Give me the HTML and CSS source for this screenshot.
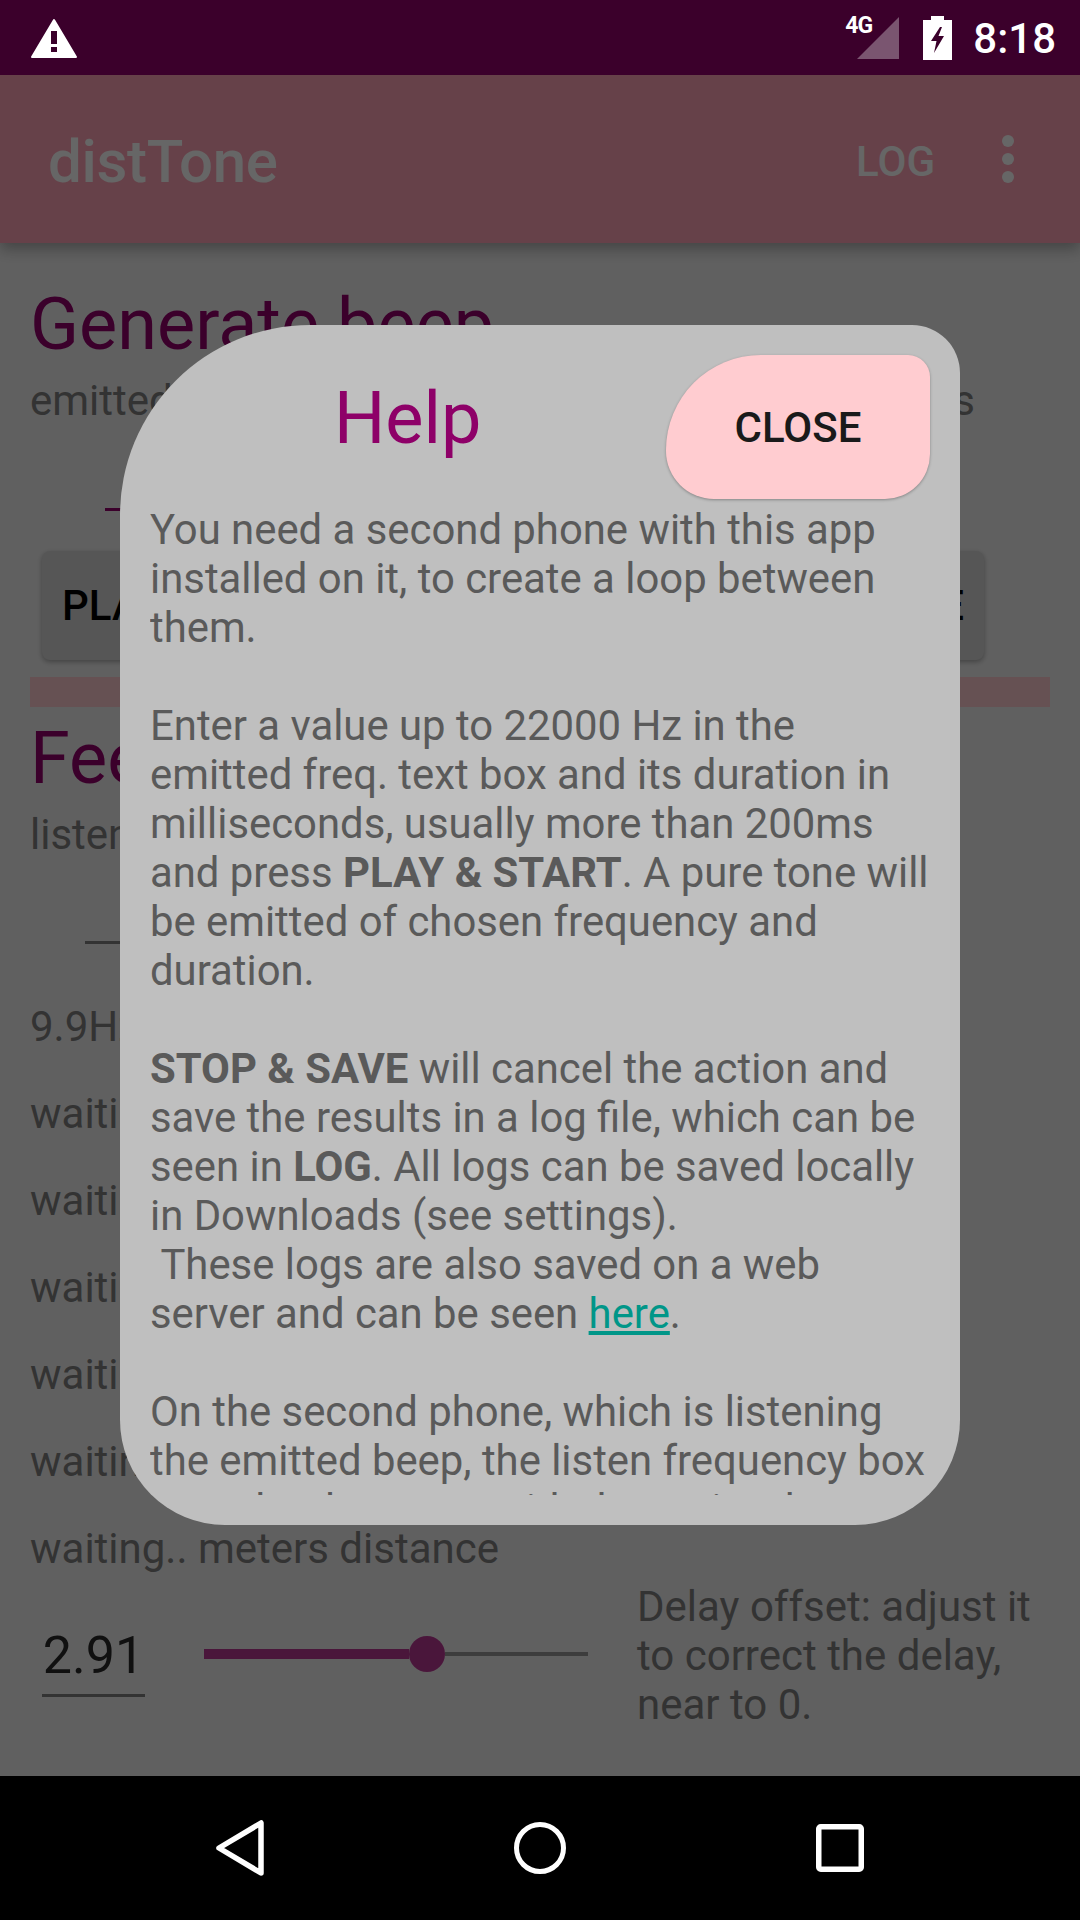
FILE: index.html
```html
<!DOCTYPE html>
<html lang="en">
<head>
    <meta charset="UTF-8">
    <meta name="viewport" content="width=device-width, initial-scale=1.0">
    <title>distTone</title>
    <link rel="stylesheet" href="styles.css">
</head>
<body>
    <div class="screen">
        <div class="status-bar">
            <svg class="warning-icon" viewBox="0 0 46 40">
                <path fill="#fff" stroke="#fff" stroke-width="2" stroke-linejoin="round" d="M23 2 L45 39 L1 39 Z"/>
                <path fill="#3b002b" d="M20 13 L26 13 L26 26 L20 26 Z M20 29 L26 29 L26 34 L20 34 Z"/>
            </svg>
            <div class="status-right">
                <span class="net-label">4G</span>
                <svg class="signal-icon" viewBox="0 0 42 42"><path fill="#7a5570" d="M42 0 L42 42 L0 42 Z"/></svg>
                <svg class="battery-icon" viewBox="0 0 29 44"><path fill-rule="evenodd" fill="#fff" d="M8 0 L21 0 L21 4 L29 4 L29 44 L0 44 L0 4 L8 4 Z M17 11 L8 25 L13.5 25 L11 37 L21 20 L15.5 20 L19 11 Z"/></svg>
                <span class="clock">8:18</span>
            </div>
        </div>

        <div class="app-bar">
            <span class="app-title">distTone</span>
            <span class="app-action">LOG</span>
            <div class="overflow-dots"><i></i><i></i><i></i></div>
        </div>

        <div class="content">
            <h2 class="section-title">Generate beep</h2>
            <div class="field-labels">
                <span>emitted freq.</span>
                <span>duration ms</span>
            </div>
            <div class="input-line input-line-top"></div>
            <div class="action-row">
                <button class="action-btn">PLAY &amp; START</button>
                <button class="action-btn">STOP &amp; SAVE</button>
            </div>
            <div class="divider"></div>
            <h2 class="section-title section-title-second">Feedback</h2>
            <div class="field-labels"><span>listen frequency</span></div>
            <div class="input-line input-line-bottom"></div>
            <div class="result-list">
                <div>9.9Hz</div>
                <div>waiting..</div>
                <div>waiting..</div>
                <div>waiting..</div>
                <div>waiting..</div>
                <div>waiting..</div>
                <div>waiting.. meters distance</div>
            </div>
            <div class="offset-row">
                <div class="offset-value">2.91</div>
                <div class="slider">
                    <div class="slider-fill"></div>
                    <div class="slider-thumb"></div>
                    <div class="slider-rest"></div>
                </div>
                <div class="offset-text">Delay offset: adjust it to correct the delay, near to 0.</div>
            </div>
        </div>

        <div class="nav-bar">
            <svg class="nav-icon" viewBox="0 0 60 64"><path fill="none" stroke="#fff" stroke-width="5.5" stroke-linejoin="round" d="M51 7 L51 57 L9 32 Z"/></svg>
            <svg class="nav-icon" viewBox="0 0 60 64"><circle cx="30" cy="32" r="23.5" fill="none" stroke="#fff" stroke-width="5"/></svg>
            <svg class="nav-icon" viewBox="0 0 60 64"><rect x="8.75" y="10.75" width="42.5" height="42.5" rx="2" fill="none" stroke="#fff" stroke-width="5.5"/></svg>
        </div>

        <div class="scrim"></div>

        <div class="dialog">
            <div class="dialog-head">
                <span class="dialog-title">Help</span>
                <button class="close-btn">CLOSE</button>
            </div>
            <div class="dialog-text">
                You need a second phone with this app installed on it, to create a loop between them.<br><br>
                Enter a value up to 22000 Hz in the emitted freq. text box and its duration in milliseconds, usually more than 200ms and press <b>PLAY &amp; START</b>. A pure tone will be emitted of chosen frequency and duration.<br><br>
                <b>STOP &amp; SAVE</b> will cancel the action and save the results in a log file, which can be seen in <b>LOG</b>. All logs can be saved locally in Downloads (see settings).<br>
                &nbsp;These logs are also saved on a web server and can be seen <a href="#">here</a>.<br><br>
                On the second phone, which is listening the emitted beep, the listen frequency box
                must be the same with the emitted one, and
            </div>
        </div>
    </div>
</body>
</html>
```

FILE: styles.css
```css
* {
    box-sizing: border-box;
}
body {
    margin: 0;
    font-family: Roboto, "Liberation Sans", sans-serif;
}
.screen {
    position: relative;
    width: 1080px;
    height: 1920px;
    display: flex;
    flex-direction: column;
    overflow: hidden;
    background-color: #f0f0f0;
}

/* status bar */
.status-bar {
    height: 75px;
    flex: none;
    display: flex;
    justify-content: space-between;
    align-items: center;
    padding: 0 24px 0 31px;
    background-color: #3b002b;
    position: relative;
    z-index: 3;
}
.warning-icon {
    width: 46px;
    height: 40px;
}
.status-right {
    display: flex;
    align-items: center;
    position: relative;
    color: #fff;
}
.net-label {
    position: absolute;
    left: 0;
    top: 3px;
    font-size: 23px;
    font-weight: 700;
    line-height: 22px;
    letter-spacing: -1px;
}
.signal-icon {
    width: 42px;
    height: 42px;
    margin: 0 24px 0 12px;
}
.battery-icon {
    width: 29px;
    height: 44px;
    margin-right: 21px;
}
.clock {
    font-size: 42px;
    font-weight: 500;
    margin-top: 2px;
}

/* app bar */
.app-bar {
    height: 168px;
    flex: none;
    display: flex;
    align-items: center;
    padding: 4px 0 0 48px;
    background-color: #ffa3b6;
    box-shadow: 0 6px 14px rgba(0, 0, 0, 0.3);
    position: relative;
}
.app-title {
    flex: 1;
    font-size: 60px;
    font-weight: 500;
    letter-spacing: -0.3px;
    color: #fff;
}
.app-action {
    font-size: 42px;
    font-weight: 500;
    color: #fff;
    margin-right: 67px;
}
.overflow-dots {
    display: flex;
    flex-direction: column;
    gap: 6px;
    margin: 0 66px 4px 0;
}
.overflow-dots i {
    width: 12px;
    height: 12px;
    border-radius: 50%;
    background-color: #fff;
}

/* content under the dialog */
.content {
    flex: 1;
    padding: 40px 30px 0;
    color: #808080;
}
.section-title {
    margin: 0;
    font-size: 72px;
    font-weight: 400;
    line-height: 84px;
    color: #94006b;
}
.section-title-second {
    margin-top: 10px;
}
.field-labels {
    display: flex;
    justify-content: space-between;
    margin-top: 9px;
    padding-right: 75px;
    font-size: 42px;
    line-height: 49px;
}
.input-line {
    height: 3px;
    background-color: #94006b;
}
.input-line-top {
    width: 200px;
    margin: 83px 0 0 75px;
}
.input-line-bottom {
    width: 200px;
    margin: 82px 0 0 55px;
    background-color: #808080;
}
.action-row {
    display: flex;
    justify-content: space-between;
    margin-top: 40px;
    padding: 0 66px 0 12px;
}
.action-btn {
    width: 450px;
    height: 109px;
    padding: 0 20px;
    border: none;
    border-radius: 8px;
    font-family: inherit;
    font-size: 42px;
    font-weight: 500;
    text-align: left;
    color: #000;
    background-color: #d6d6d6;
    box-shadow: 0 2px 5px rgba(0, 0, 0, 0.3);
}
.action-btn + .action-btn {
    text-align: right;
}
.divider {
    height: 30px;
    margin-top: 17px;
    background-color: #ffcbcf;
}
.result-list {
    margin-top: 58px;
    font-size: 42px;
    line-height: 49px;
}
.result-list div + div {
    margin-top: 38px;
}
.offset-row {
    display: flex;
    align-items: flex-start;
    margin-top: 9px;
}
.offset-value {
    width: 103px;
    margin: 43px 0 0 12px;
    padding-bottom: 8px;
    font-size: 52px;
    line-height: 61px;
    text-align: center;
    color: #2a2a2a;
    border-bottom: 3px solid #808080;
}
.slider {
    width: 384px;
    height: 36px;
    margin: 54px 0 0 59px;
    display: flex;
    align-items: center;
}
.slider-fill {
    width: 205px;
    height: 10px;
    background-color: #b93794;
}
.slider-thumb {
    width: 36px;
    height: 36px;
    flex: none;
    border-radius: 50%;
    background-color: #b93794;
}
.slider-rest {
    flex: 1;
    height: 4px;
    background-color: #999;
}
.offset-text {
    flex: 1;
    margin-left: 49px;
    font-size: 42px;
    line-height: 49px;
}

/* nav bar */
.nav-bar {
    height: 144px;
    flex: none;
    display: flex;
    justify-content: center;
    align-items: center;
    gap: 240px;
    background-color: #000;
    position: relative;
    z-index: 3;
}
.nav-icon {
    width: 60px;
    height: 64px;
}

/* dialog */
.scrim {
    position: absolute;
    inset: 0;
    z-index: 1;
    background-color: rgba(0, 0, 0, 0.6);
}
.dialog {
    position: absolute;
    left: 120px;
    top: 325px;
    width: 840px;
    height: 1200px;
    z-index: 2;
    display: flex;
    flex-direction: column;
    padding: 30px 30px 30px;
    background-color: #bfbfbf;
    border-radius: 190px 48px 105px 105px;
}
.dialog-head {
    display: flex;
    align-items: center;
    flex: none;
}
.dialog-title {
    flex: 1;
    padding-left: 184px;
    margin-top: -18px;
    font-size: 72px;
    color: #8e0068;
}
.close-btn {
    width: 264px;
    height: 144px;
    border: none;
    border-radius: 95px 22px 45px 48px;
    font-family: inherit;
    font-size: 42px;
    font-weight: 500;
    color: #1a1a1a;
    background-color: #ffccd0;
    box-shadow: 0 1px 3px rgba(0, 0, 0, 0.3);
}
.dialog-text {
    flex: 1;
    min-height: 0;
    overflow: hidden;
    padding-top: 6px;
    font-size: 41.85px;
    line-height: 49px;
    color: #5a5a5a;
}
.dialog-text a {
    color: #009688;
}
```
